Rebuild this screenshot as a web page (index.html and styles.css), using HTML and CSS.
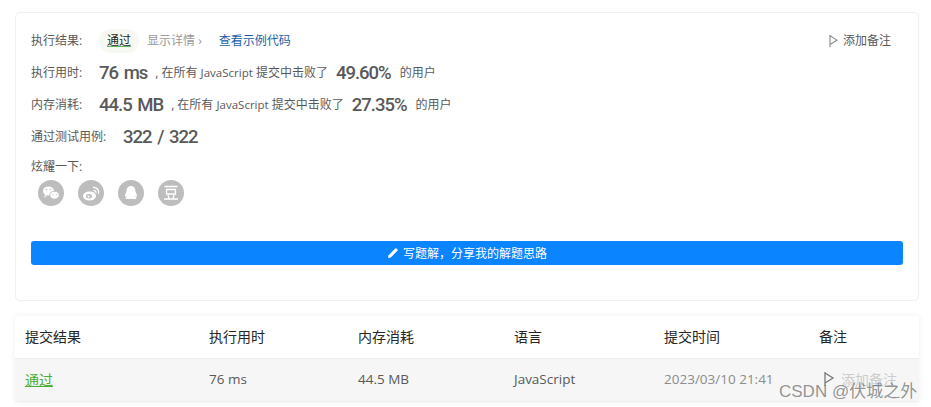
FILE: index.html
```html
<!DOCTYPE html>
<html lang="zh-CN">
<head>
    <meta charset="UTF-8">
    <title>提交结果</title>
    <link rel="stylesheet" href="styles.css">
</head>
<body>
    <section class="result-card">
        <div class="result-row first-row">
            <span class="label">执行结果:</span>
            <span class="status-pill"><a class="status-link">通过</a></span>
            <span class="details">显示详情 ›</span>
            <span class="sample-link">查看示例代码</span>
            <span class="note-btn">
                <svg class="flag" viewBox="0 0 12 16"><path d="M2 1v14M2 2l8 5-8 5" fill="none" stroke="#8a8a8a" stroke-width="1.3"/></svg>
                添加备注
            </span>
        </div>
        <div class="result-row">
            <span class="label">执行用时:</span>
            <span class="stat">76 ms</span>
            <span class="muted">, 在所有 <span class="latin">JavaScript</span> 提交中击败了</span>
            <span class="percent">49.60%</span>
            <span class="muted">的用户</span>
        </div>
        <div class="result-row">
            <span class="label">内存消耗:</span>
            <span class="stat">44.5 MB</span>
            <span class="muted">, 在所有 <span class="latin">JavaScript</span> 提交中击败了</span>
            <span class="percent">27.35%</span>
            <span class="muted">的用户</span>
        </div>
        <div class="result-row">
            <span class="label wide">通过测试用例:</span>
            <span class="stat">322 / 322</span>
        </div>
        <div class="share-title">炫耀一下:</div>
        <div class="share-icons">
            <span class="share-icon">
                <svg viewBox="0 0 26 26"><ellipse cx="10.5" cy="11" rx="5.500" ry="4.600" fill="#fff"/><path d="M7 15l-1 2.500 3-1.500z" fill="#fff"/><ellipse cx="16.500" cy="15.200" rx="4.800" ry="4" fill="#fff" stroke="#bdbdbd"/><circle cx="8.500" cy="9.500" r=".8" fill="#bdbdbd"/><circle cx="12.500" cy="9.500" r=".8" fill="#bdbdbd"/><circle cx="15" cy="14.500" r=".6" fill="#bdbdbd"/><circle cx="18.500" cy="14.500" r=".6" fill="#bdbdbd"/></svg>
            </span>
            <span class="share-icon">
                <svg viewBox="0 0 26 26"><ellipse cx="11.500" cy="16" rx="6.500" ry="4.500" fill="#fff"/><ellipse cx="11" cy="16.200" rx="3" ry="2.200" fill="#bdbdbd"/><circle cx="10.500" cy="16.500" r="1.100" fill="#fff"/><path d="M15 7.500a5 5 0 0 1 5.500 6.500M15.500 10.300a2.200 2.200 0 0 1 2.400 2.800" fill="none" stroke="#fff" stroke-width="1.300"/></svg>
            </span>
            <span class="share-icon">
                <svg viewBox="0 0 26 26"><path d="M13 6c3 0 4.400 2.300 4.400 5 0 1 1.600 3 1.600 5 0 1.200-1 .8-1.600-.2 0 1.200 1 1.700 1 2.400 0 1-2.500 1-5.400.6-2.900.4-5.400.4-5.400-.6 0-.7 1-1.200 1-2.400-.6 1-1.600 1.400-1.600.2 0-2 1.600-4 1.600-5 0-2.700 1.400-5 4.400-5z" fill="#fff"/></svg>
            </span>
            <span class="share-icon">
                <svg viewBox="0 0 26 26"><path d="M6.500 6.500h13M8.500 9.500h9v4.500h-9zM10 15l1 3.500M16 15l-1 3.500M6 19h14" fill="none" stroke="#fff" stroke-width="1.300"/></svg>
            </span>
        </div>
        <div class="solution-btn">
            <svg class="pencil" viewBox="0 0 12 12"><path d="M1 11l.6-2.800L8.200 1.600a1 1 0 0 1 1.400 0l.8.8a1 1 0 0 1 0 1.400L3.800 10.400z" fill="#fff"/></svg>
            写题解，分享我的解题思路
        </div>
    </section>

    <section class="submission-table">
        <div class="table-row table-head">
            <span class="col-result">提交结果</span>
            <span class="col-time">执行用时</span>
            <span class="col-memory">内存消耗</span>
            <span class="col-lang">语言</span>
            <span class="col-date">提交时间</span>
            <span class="col-note">备注</span>
        </div>
        <div class="table-row table-data">
            <span class="col-result"><a class="pass-link">通过</a></span>
            <span class="col-time">76 ms</span>
            <span class="col-memory">44.5 MB</span>
            <span class="col-lang">JavaScript</span>
            <span class="col-date date-text">2023/03/10 21:41</span>
            <span class="col-note note-faded">
                <svg class="flag-dark" viewBox="0 0 12 16"><path d="M2 1v14M2 2l8 5-8 5" fill="none" stroke="#777" stroke-width="1.300"/></svg>
                添加备注
            </span>
        </div>
    </section>

    <div class="watermark">CSDN @伏城之外</div>
</body>
</html>
```

FILE: styles.css
```css
/* General body styling */
html, body {
    height: 407px;
    overflow: hidden;
}

body {
    margin: 0;
    padding: 12px 12px 0 15px;
    box-sizing: border-box;
    background: #fff;
    color: #595959;
    font-family: "Open Sans", "Noto Sans CJK SC", sans-serif;
    font-size: 12px;
    position: relative;
}

.result-card {
    height: 289px;
    box-sizing: border-box;
    border: 1px solid #f0f0f0;
    border-radius: 5px;
    padding: 12px 15px 0;
}

.result-row {
    display: flex;
    align-items: center;
    height: 32px;
    line-height: 32px;
}

.label {
    width: 68px;
    flex: none;
}

.label.wide {
    width: 92px;
}

.status-pill {
    background: #f6f9f1;
    border-radius: 12px;
    height: 24px;
    line-height: 24px;
    padding: 0 8px;
    margin-right: 8px;
}

.status-link {
    color: #262626;
    text-decoration: underline;
    text-decoration-color: #5cb85c;
}

.details {
    color: #999;
    margin-right: 17px;
}

.sample-link {
    color: #1a5ea8;
}

.note-btn {
    margin-left: auto;
    margin-right: 12px;
    display: flex;
    align-items: center;
    gap: 4px;
}

.flag {
    width: 11px;
    height: 14px;
}

.stat,
.percent {
    font-family: Roboto, sans-serif;
    font-size: 18.5px;
    font-weight: 500;
    letter-spacing: -1px;
    word-spacing: 2px;
    color: #595959;
}

.stat {
    margin-right: 8px;
}

.percent {
    margin: 0 9px 0 8px;
}

.latin {
    font-size: 11.5px;
}

.share-title {
    margin-top: 3px;
    height: 22px;
    line-height: 22px;
}

.share-icons {
    display: flex;
    gap: 14px;
    padding-left: 7px;
    margin-top: 2px;
}

.share-icon {
    width: 26px;
    height: 26px;
    border-radius: 50%;
    background: #bdbdbd;
}

.share-icon svg {
    display: block;
    width: 26px;
    height: 26px;
}

.solution-btn {
    margin-top: 35px;
    height: 24px;
    background: #0a84ff;
    border-radius: 3px;
    color: #fff;
    display: flex;
    align-items: center;
    justify-content: center;
    gap: 4px;
}

.pencil {
    width: 12px;
    height: 12px;
}

.submission-table {
    margin-top: 15px;
    box-shadow: 0 0 6px rgba(0, 0, 0, 0.07);
    border-radius: 3px;
}

.table-row {
    display: flex;
    align-items: center;
    box-sizing: border-box;
    padding: 0 0 3px 10px;
    border-bottom: 1px solid #eee;
    font-size: 14px;
}

.table-head {
    height: 43px;
    color: #262626;
}

.table-data {
    height: 43px;
    background: #f6f6f6;
}

.col-result { width: 184px; }
.col-time { width: 149px; font-size: 13.5px; }
.col-memory { width: 156px; font-size: 13.5px; }
.col-lang { width: 150px; font-size: 13.5px; }
.col-date { width: 155px; font-size: 13.5px; }

.table-head span {
    font-size: 14px;
}

.pass-link {
    color: #4cae33;
    text-decoration: underline;
}

.date-text {
    color: #8c8c8c;
}

.note-faded {
    color: #ccc;
    display: flex;
    align-items: center;
    gap: 6px;
    margin-left: 4px;
}

.flag-dark {
    width: 12px;
    height: 16px;
}

/* image watermark sits over the table */
.watermark {
    position: absolute;
    left: 779px;
    top: 377px;
    font-family: "Liberation Sans", "Noto Sans CJK SC", sans-serif;
    font-size: 17px;
    color: rgba(90, 90, 90, 0.65);
    white-space: nowrap;
}
```
